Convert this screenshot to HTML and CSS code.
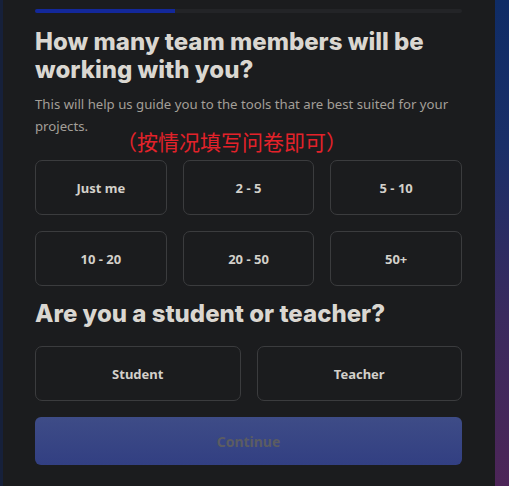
FILE: index.html
```html
<!DOCTYPE html>
<html>
<head>
<meta charset="utf-8">
<link rel="stylesheet" href="styles.css">
</head>
<body>
<div class="edge"></div>
<main class="panel">
  <div class="progress"><div class="progress-fill" style="width:140px"></div></div>
  <h1 class="title">How many team members will be working with you?</h1>
  <p class="subtitle">This will help us guide you to the tools that are best suited for your projects.</p>
  <div class="note">（按情况填写问卷即可）</div>
  <div class="grid three">
    <button class="opt">Just me</button>
    <button class="opt">2 - 5</button>
    <button class="opt">5 - 10</button>
    <button class="opt">10 - 20</button>
    <button class="opt">20 - 50</button>
    <button class="opt">50+</button>
  </div>
  <h2 class="title second">Are you a student or teacher?</h2>
  <div class="grid two">
    <button class="opt">Student</button>
    <button class="opt">Teacher</button>
  </div>
  <button class="continue">Continue</button>
</main>
<div class="side"></div>
</body>
</html>
```
FILE: styles.css
```css
html, body {
  margin: 0;
  height: 100%;
}
body {
  display: flex;
  background: #1b1c1e;
  font-family: "Noto Sans", "Open Sans", sans-serif;
  overflow: hidden;
}
.edge {
  width: 3px;
  background: #16203a;
  flex: none;
}
.panel {
  width: 427px;
  flex: none;
  padding: 9px 33px 0 32px;
  background: #1b1c1e;
  display: flex;
  flex-direction: column;
}
.side {
  flex: 1;
  background: linear-gradient(180deg, #0f2c66 0%, #1a2f68 30%, #3a2a5e 65%, #4d2558 100%);
}
.progress {
  height: 4px;
  border-radius: 2px;
  background: #232427;
  overflow: hidden;
}
.progress-fill {
  height: 100%;
  background: #13289a;
}
.title {
  margin: 15px 0 0;
  font-family: Inter, sans-serif;
  font-weight: 800;
  font-size: 24px;
  line-height: 28px;
  letter-spacing: 0;
  color: #dad7d1;
}
.subtitle {
  margin: 9px 0 0;
  font-size: 13.2px;
  line-height: 22px;
  color: #a39f98;
}
.note {
  margin: 0 0 0 81px;
  font-family: "Noto Sans CJK SC", sans-serif;
  font-size: 21px;
  line-height: 8px;
  color: #e3222a;
}
.grid {
  display: grid;
  margin-top: 15px;
  gap: 16px 16px;
}
.three { grid-template-columns: repeat(3, 1fr); }
.two { grid-template-columns: repeat(2, 1fr); }
.opt {
  height: 55px;
  border: 1px solid #3b3c3e;
  border-radius: 7px;
  background: #1b1c1e;
  color: #d3d0ca;
  font-family: "Noto Sans", sans-serif;
  font-weight: 700;
  font-size: 13px;
  padding: 0;
}
.second {
  margin-top: 14px;
}
.two {
  margin-top: 18px;
}
.continue {
  margin-top: 16px;
  height: 48px;
  border: none;
  border-radius: 6px;
  background: linear-gradient(180deg, #3e4c87 0%, #323f82 100%);
  color: #5b5c62;
  font-family: "Noto Sans", sans-serif;
  font-weight: 700;
  font-size: 14px;
  padding: 0;
}
```
